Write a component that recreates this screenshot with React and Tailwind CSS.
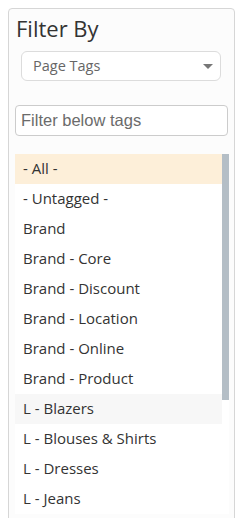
const tags = [
  "- All -",
  "- Untagged -",
  "Brand",
  "Brand - Core",
  "Brand - Discount",
  "Brand - Location",
  "Brand - Online",
  "Brand - Product",
  "L - Blazers",
  "L - Blouses & Shirts",
  "L - Dresses",
  "L - Jeans",
];

export default function App() {
  return (
    <div className="h-[518px] overflow-hidden bg-white pl-2 pt-2 pr-[8px] font-['Open_Sans',sans-serif] text-[#333]">
      <div className="h-[530px] rounded-t-[4px] border border-[#d6d6d6] bg-[#fcfcfc]">
        <div className="px-[7px] pt-[4px]">
          <h2 className="text-[22px] leading-[30px] text-[#333]">Filter By</h2>
          <div className="ml-[5px] mr-[6px] mt-[8px] flex h-[30px] items-center justify-between rounded-[6px] border border-[#dcdcdc] bg-white pl-[11px] pr-[7px]">
            <span className="text-[14.5px] text-[#666]">Page Tags</span>
            <span className="h-0 w-0 border-x-[5px] border-t-[5px] border-x-transparent border-t-[#777]" />
          </div>
        </div>
        <div className="mt-[24px] px-[6px]">
          <input
            type="text"
            placeholder="Filter below tags"
            className="h-[31px] w-full rounded-[4px] border border-[#ccc] bg-white px-[5px] font-['Liberation_Sans',sans-serif] text-[16.5px] text-[#333] placeholder:text-[#6b6b6b] outline-none"
          />
        </div>
        <div className="mt-[18px] ml-[6px] mr-[5px] flex bg-white">
          <ul className="flex-1">
            {tags.map((tag, i) => (
              <li
                key={tag}
                className={`h-[30px] pl-[8px] text-[15px] leading-[29px] ${
                  i === 0 ? "bg-[#fdefd9]" : i === 8 ? "bg-[#f7f7f7]" : ""
                }`}
              >
                {tag}
              </li>
            ))}
          </ul>
          <div className="w-[7px]">
            <div className="h-[246px] bg-[#b4bec6]" />
          </div>
        </div>
      </div>
    </div>
  );
}
